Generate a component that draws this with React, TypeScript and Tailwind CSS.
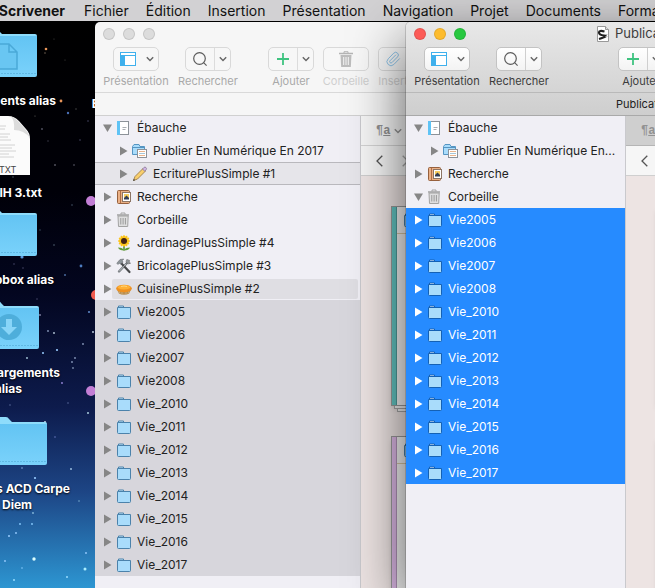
import type { ReactNode } from 'react';
import { clsx } from 'clsx';
import { Paperclip } from 'lucide-react';

type IconName =
  | 'draft'
  | 'publish'
  | 'pencil'
  | 'research'
  | 'trash'
  | 'sunflower'
  | 'tools'
  | 'pie'
  | 'folder';

interface BinderItem {
  label: string;
  icon: IconName;
  nested?: boolean;
  open?: boolean;
  state?: 'current' | 'hovered' | 'selected';
}

const YEARS = [
  'Vie2005', 'Vie2006', 'Vie2007', 'Vie2008', 'Vie_2010', 'Vie_2011',
  'Vie_2012', 'Vie_2013', 'Vie_2014', 'Vie_2015', 'Vie_2016', 'Vie_2017',
];

const yearItems: BinderItem[] = YEARS.map((label) => ({ label, icon: 'folder', state: 'selected' }));

const backItems: BinderItem[] = [
  { label: 'Ébauche', icon: 'draft', open: true },
  { label: 'Publier En Numérique En 2017', icon: 'publish', nested: true },
  { label: 'EcriturePlusSimple #1', icon: 'pencil', nested: true, state: 'current' },
  { label: 'Recherche', icon: 'research' },
  { label: 'Corbeille', icon: 'trash' },
  { label: 'JardinagePlusSimple #4', icon: 'sunflower' },
  { label: 'BricolagePlusSimple #3', icon: 'tools' },
  { label: 'CuisinePlusSimple #2', icon: 'pie', state: 'hovered' },
  ...yearItems,
];

const frontItems: BinderItem[] = [
  { label: 'Ébauche', icon: 'draft', open: true },
  { label: 'Publier En Numérique En...', icon: 'publish', nested: true },
  { label: 'Recherche', icon: 'research' },
  { label: 'Corbeille', icon: 'trash', open: true },
  ...yearItems,
];

const MENUS = ['Fichier', 'Édition', 'Insertion', 'Présentation', 'Navigation', 'Projet', 'Documents', 'Format'];

// x, y, radius, colour
const STARS: [number, number, number, string][] = [
  [46, 27, 1.3, '#e8955a'], [45, 31, 0.7, '#887766'], [54, 17, 0.6, '#444'], [65, 38, 0.5, '#555'],
  [61, 79, 1.4, '#e8955a'], [68, 91, 1.2, '#4a6fb5'], [76, 87, 0.7, '#555'], [35, 94, 0.6, '#666'],
  [42, 107, 0.9, '#556'], [88, 99, 0.7, '#557'], [48, 119, 0.7, '#445'], [80, 118, 0.7, '#557'],
  [55, 143, 0.8, '#889'], [74, 143, 0.8, '#667'], [13, 155, 0.8, '#456'], [72, 183, 0.8, '#456'],
  [22, 235, 1.6, '#5b9be0'], [40, 208, 0.7, '#456'], [54, 223, 0.8, '#567'], [81, 244, 1.4, '#4d7cc0'],
  [65, 253, 1, '#4a6a9c'], [14, 242, 0.7, '#557'], [23, 246, 0.7, '#557'], [37, 277, 0.7, '#557'],
  [89, 290, 1.1, '#5d86c4'], [40, 293, 0.9, '#88a'], [48, 309, 0.9, '#89b'], [54, 311, 0.9, '#bcd'],
  [93, 310, 0.9, '#cde'], [83, 322, 0.9, '#89b'], [57, 328, 1.1, '#9cf'], [43, 331, 1, '#9cf'],
  [27, 336, 0.9, '#acd'], [75, 336, 0.9, '#89b'], [72, 340, 0.9, '#89b'], [73, 346, 0.9, '#78a'],
  [62, 361, 0.9, '#98d'], [68, 381, 0.7, '#67a'], [88, 391, 1, '#acd'], [45, 400, 1, '#cde'],
  [55, 415, 0.8, '#67b'], [10, 383, 0.7, '#67a'], [71, 447, 1, '#9bd'], [35, 456, 1.1, '#9cf'],
  [22, 446, 0.8, '#8ad'], [79, 479, 0.8, '#7ac'], [33, 491, 0.9, '#8bd'], [20, 502, 0.9, '#8cf'],
  [32, 502, 0.9, '#8cf'], [16, 511, 0.9, '#9cf'], [9, 514, 1, '#9cf'], [34, 537, 1.7, '#dff'],
  [5, 539, 0.9, '#9cf'], [86, 531, 0.9, '#9cf'], [85, 547, 1.5, '#aef'], [22, 546, 0.8, '#8cf'],
  [67, 555, 1, '#9df'], [14, 558, 1, '#9df'],
];

function RowIcon({ name, lit }: { name: IconName; lit?: boolean }) {
  const common = { width: 16, height: 16, viewBox: '0 0 16 16', className: 'shrink-0', 'aria-hidden': true };
  switch (name) {
    case 'draft':
      return (
        <svg {...common}>
          <rect x="1.5" y="1.5" width="11" height="13" fill="#fff" stroke="#8c9298" />
          <rect x="1" y="1" width="3" height="14" fill="#5fc3f5" />
          <path d="M6.500 7.500h4M6.500 9.500h3" stroke="#a9adb2" />
        </svg>
      );
    case 'publish':
      return (
        <svg {...common}>
          <path d="M.5 3.500l1.500-2h5l1 2h4.500v8H.5z" fill="#a9dcfb" stroke="#5595c2" />
          <path d="M1 4.500h11" stroke="#5595c2" />
          <rect x="5.500" y="6.500" width="9" height="8" fill="#fff" stroke="#8d9298" />
          <path d="M7 8.500h6M7 12.500h6" stroke="#e9b48d" />
          <path d="M7 10.500h6" stroke="#a5c6d8" />
        </svg>
      );
    case 'pencil':
      return (
        <svg {...common}>
          <path d="M1.500 14.500l1.500-4 8-8 2.500 2.500-8 8z" fill="#f9cf6c" stroke="#a58551" />
          <path d="M10.500 3l1.500-1.600q1-.8 2 .2t.2 2L12.800 5.300z" fill="#d0b5e6" stroke="#8b7997" strokeWidth=".8" />
          <path d="M1 15l.8-2.200 1.400 1.400z" fill="#444" />
        </svg>
      );
    case 'research':
      return (
        <svg {...common}>
          <rect x="1.500" y="1.500" width="12" height="13" rx="1" fill="#eab086" stroke="#96603d" />
          <path d="M4.500 2v12" stroke="#b06f45" />
          <rect x="6.500" y="3.500" width="8" height="9" fill="#fff" stroke="#8c7565" />
          <rect x="8" y="5" width="5" height="5" fill="#f6cc62" />
          <path d="M8 10.500V9l2.500-2.500L13 9v1.500z" fill="#333c55" />
        </svg>
      );
    case 'trash':
      return (
        <svg {...common}>
          <path d="M5 2.500V1h4v1.500" fill="none" stroke="#a2a2a2" />
          <path d="M1 3h12" stroke="#a2a2a2" strokeWidth="1.400" />
          <path d="M2 4h10.200l-.5 10.500H2.500z" fill="#dededf" stroke="#a2a2a2" />
          <path d="M4.800 6v6.500M7.100 6v6.500M9.400 6v6.500" stroke="#999" />
        </svg>
      );
    case 'sunflower':
      return (
        <svg {...common}>
          <path d="M8 9v6.500" stroke="#4d8b2c" strokeWidth="1.500" />
          <path d="M8 15.500q-1-3-6-3 1 3 6 3zM8 15.500q1-3 6-3-1 3-6 3z" fill="#5f9a35" />
          <g fill="#fdc51c">
            {[0, 30, 60, 90, 120, 150].map((deg) => (
              <ellipse key={deg} cx="8" cy="6" rx="1.800" ry="6" transform={`rotate(${deg} 8 6)`} />
            ))}
          </g>
          <circle cx="8" cy="6" r="3" fill="#452414" />
        </svg>
      );
    case 'tools':
      return (
        <svg {...common}>
          <path d="M3 13.500L12 4" stroke="#777c80" strokeWidth="2.400" strokeLinecap="round" />
          <path d="M10.800 1.500q-1.500 2 0 3.500t3.800.2l-1.600-.8.600-2z" fill="#94999d" stroke="#666" strokeWidth=".6" />
          <path d="M5 5l8.500 9" stroke="#48494b" strokeWidth="2.200" strokeLinecap="round" />
          <path d="M.8 5.200L4 1.500l3.800-.5-1.500 1.500.700 1.800L4.500 6l-1.200-.8L2 6.500z" fill="#8d9499" stroke="#5b5f62" strokeWidth=".5" />
          <path d="M3.200 13.300L10 6" stroke="#c9cdd0" strokeWidth=".8" />
        </svg>
      );
    case 'pie':
      return (
        <svg {...common}>
          <path d="M.5 7.500h15l-2.500 5.300q-5 2-10 0z" fill="#b98f52" />
          <path d="M3 9.500l.8 3M6 10v3.500M10 10v3.500M13 9.500l-.8 3" stroke="#c9aa77" />
          <ellipse cx="8" cy="7.500" rx="7.800" ry="3.800" fill="#ee9020" />
          <path d="M1.500 7q.5-3 6.500-3T14.500 7q-6.500 3-13 0z" fill="#ffb035" />
          <path d="M5 5.500q3-1 6 0" stroke="#ffd579" fill="none" />
        </svg>
      );
    default:
      return (
        <svg {...common}>
          <path d="M2.500 4V2h5v2" fill={lit ? '#fff' : '#c9e8fb'} stroke={lit ? '#1461b5' : '#4b82ab'} />
          <path d="M1.500 3.500h13v10q0 1-1 1h-11q-1 0-1-1z" fill="#a9dcfb" stroke={lit ? '#1461b5' : '#4b82ab'} />
        </svg>
      );
  }
}

function Disclosure({ open, lit }: { open?: boolean; lit?: boolean }) {
  return (
    <svg width="9" height="10" viewBox="0 0 9 10" className="shrink-0" fill={lit ? '#fff' : '#868686'} aria-hidden>
      <path d={open ? 'M0 1.500h9L4.500 9z' : 'M1 .5L8.500 5 1 9.500z'} />
    </svg>
  );
}

function ChevronDown({ className }: { className?: string }) {
  return (
    <svg width="8" height="6" viewBox="0 0 8 6" className={className} fill="none" stroke="currentColor" strokeWidth="1.400" aria-hidden>
      <path d="M.8 1.200L4 4.500l3.200-3.300" />
    </svg>
  );
}

function Binder({ items, active }: { items: BinderItem[]; active?: boolean }) {
  return (
    <ul>
      {items.map((item) => {
        const selected = item.state === 'selected';
        return (
          <li key={item.label} className={clsx(selected && (active ? 'bg-[#268bff]' : 'bg-[#d7d6dc]'))}>
            <button
              type="button"
              className={clsx(
                'flex h-[23px] w-full items-center whitespace-nowrap text-left text-[12px]',
                item.nested ? 'pl-6' : 'pl-2',
                item.state === 'current' && 'border-y border-[#b9b8bd] bg-[#e6e5ea]',
                selected && active ? 'text-white' : 'text-[#222]',
              )}
            >
              <Disclosure open={item.open} lit={selected && active} />
              <span
                className={clsx(
                  'flex h-5 min-w-0 flex-1 items-center gap-[5px] pl-1',
                  item.state === 'hovered' && 'mr-0.5 rounded-xs bg-[#dfdee3]',
                )}
              >
                <RowIcon name={item.icon} lit={selected && active} />
                {item.label}
              </span>
            </button>
          </li>
        );
      })}
    </ul>
  );
}

interface ToolProps {
  label: string;
  children: ReactNode;
  active?: boolean;
  width: string;
  menu?: 'plain' | 'split';
  disabled?: boolean;
}

function Tool({ label, children, active, width, menu, disabled }: ToolProps) {
  return (
    <button type="button" disabled={disabled} className={clsx('flex shrink-0 flex-col items-center gap-0.5', width)}>
      <span
        className={clsx(
          'flex h-6 w-[46px] items-stretch rounded-[5px] border',
          active ? 'border-[#c3c3c3] bg-gradient-to-b from-white to-[#f3f3f3]' : 'border-[#d9d9d9] bg-[#f7f7f7]',
        )}
      >
        <span className="flex flex-1 items-center justify-center">{children}</span>
        {menu && (
          <span
            className={clsx(
              'flex w-4 items-center justify-center text-[#666]',
              menu === 'split' && (active ? 'border-l border-[#cfcfcf]' : 'border-l border-[#dcdcdc]'),
            )}
          >
            <ChevronDown />
          </span>
        )}
      </span>
      <span
        className={clsx(
          'whitespace-nowrap text-[11px] leading-4',
          active ? 'text-[#3c3c3c]' : disabled ? 'text-[#cfcfcf]' : 'text-[#a9a9a9]',
        )}
      >
        {label}
      </span>
    </button>
  );
}

function Toolbar({ active }: { active?: boolean }) {
  return (
    <div className="flex h-[46px] items-start gap-[9px] pl-2 pt-px">
      <Tool label="Présentation" width="w-[66px]" menu="plain" active={active}>
        <svg width="16" height="14" viewBox="0 0 16 14" aria-hidden>
          <rect x=".5" y=".5" width="15" height="13" fill="#fff" stroke="#3fb0ec" />
          <path d="M0 3.500h16" stroke="#3fb0ec" />
          <rect x="0" y="4" width="5" height="10" fill="#3fb0ec" />
        </svg>
      </Tool>
      <Tool label="Rechercher" width="w-[60px]" menu="split" active={active}>
        <svg width="16" height="16" viewBox="0 0 16 16" fill="none" stroke="#5b5b5b" strokeWidth="1.200" aria-hidden>
          <circle cx="7.500" cy="7.500" r="5.800" />
          <path d="M11.600 11.600l3 3" />
        </svg>
      </Tool>
      <div className={clsx('flex gap-[9px]', active ? 'ml-[60px]' : 'ml-[21px]')}>
        <Tool label="Ajouter" width="w-[46px]" menu="split" active={active}>
          <svg width="12" height="12" viewBox="0 0 12 12" stroke="#3fc380" strokeWidth="1.800" aria-hidden>
            <path d="M6 0v12M0 6h12" />
          </svg>
        </Tool>
        <Tool label="Corbeille" width="w-[46px]" active={active} disabled>
          <svg width="14" height="16" viewBox="0 0 14 16" aria-hidden>
            <path d="M5 2V.7h4V2" fill="none" stroke="#b5b5b5" />
            <path d="M0 2.500h14" stroke="#b5b5b5" strokeWidth="1.300" />
            <path d="M1.500 4h11l-.7 12H2.200z" fill="#bdbdbd" />
            <path d="M4.700 6v8M7 6v8M9.300 6v8" stroke="#f5f5f5" />
          </svg>
        </Tool>
        <Tool label="Insertion" width="w-[46px]" menu="plain" active={active} disabled>
          <Paperclip size={16} strokeWidth={1.5} className="text-[#8dc3e8]" />
        </Tool>
      </div>
    </div>
  );
}

function Card({ strip }: { strip: string }) {
  return (
    <div className="h-[200px] w-72 border border-[#9a9a9a] bg-[#f4f4f4] shadow-md">
      <div className="flex h-full">
        <div className={clsx('w-[5px] border-r border-black/20', strip)} />
        <div className="flex h-[27px] flex-1 items-center border-b border-[#d8c7a8] pl-1.5">
          <RowIcon name="folder" />
        </div>
      </div>
    </div>
  );
}

function Editor({ active }: { active?: boolean }) {
  return (
    <section className="flex min-w-0 flex-1 flex-col overflow-hidden bg-[#ede4e3]">
      <div
        className={clsx(
          'flex h-[30px] shrink-0 items-center gap-1 border-b pl-[15px] text-[#929292]',
          active ? 'border-[#b5b5b5] bg-[#cfcfcf]' : 'border-[#d3d3d3] bg-[#f6f6f6]',
        )}
      >
        <span className="font-[Liberation_Mono] text-[12px] font-bold">
          ¶<span className="underline">a</span>
        </span>
        <ChevronDown />
      </div>
      <div className="flex h-[30px] shrink-0 items-center gap-[19px] border-b border-[#cfcfcf] bg-[#f6f6f6] pl-[15px]">
        <button type="button" aria-label="Précédent" className="text-[#555]">
          <svg width="7" height="12" viewBox="0 0 7 12" fill="none" stroke="currentColor" strokeWidth="1.300">
            <path d="M6.300.7L1 6l5.300 5.300" />
          </svg>
        </button>
        <button type="button" aria-label="Suivant" className="text-[#aaa]">
          <svg width="7" height="12" viewBox="0 0 7 12" fill="none" stroke="currentColor" strokeWidth="1.300">
            <path d="M.7.7L6 6 .7 11.300" />
          </svg>
        </button>
      </div>
      <div className="flex flex-col pl-[30px] pt-[30px]">
        <Card strip="bg-[#62c4c1]" />
        <div className="ml-[3px] h-[3px] w-72 shrink-0 border border-t-0 border-[#a5a5a5] bg-[#f0f0f0]" />
        <div className="mb-6 ml-1.5 h-[3px] w-72 shrink-0 border border-t-0 border-[#a5a5a5] bg-[#f0f0f0]" />
        <Card strip="bg-[#dcb8e6]" />
      </div>
    </section>
  );
}

interface ProjectWindowProps {
  active?: boolean;
  place: string;
  items: BinderItem[];
  sidebar: string;
}

function ProjectWindow({ active, place, items, sidebar }: ProjectWindowProps) {
  const lights = active ? ['bg-[#fc5b57]', 'bg-[#fdbc2e]', 'bg-[#28c840]'] : ['bg-[#dcdcdc]', 'bg-[#dcdcdc]', 'bg-[#dcdcdc]'];
  return (
    <main
      className={clsx(
        'absolute -right-10 bottom-0 top-0 flex flex-col overflow-hidden rounded-tl-[5px]',
        active && 'shadow-[0_0_0_1px_rgba(0,0,0,0.15),0_20px_56px_rgba(0,0,0,0.65)]',
        place,
      )}
    >
      <header
        className={clsx('shrink-0', active ? 'bg-gradient-to-b from-[#e8e8e8] to-[#cecece]' : 'bg-[#f6f6f6]')}
      >
        <div className="flex h-6 items-center pl-2">
          <div className="flex gap-2">
            {lights.map((color, i) => (
              <span key={i} className={clsx('size-3 rounded-full border border-black/10', color)} />
            ))}
          </div>
          {active && (
            <h1 className="ml-[131px] flex items-center gap-1.5 whitespace-nowrap text-[13px] text-[#3d3d3d]">
              <svg width="12" height="16" viewBox="0 0 12 16" aria-hidden>
                <path d="M.5.500h8l3 3v12H.5z" fill="#fff" stroke="#999" />
                <path d="M8.500.5v3h3" fill="#ddd" stroke="#999" />
                <path d="M7.500 5.500Q2 4 2 6.500T7 9.500 2 13" fill="none" stroke="#222" strokeWidth="2.200" />
                <path d="M8 8.500h2.500M8.500 10.500h2" stroke="#bbb" />
              </svg>
              Publication
            </h1>
          )}
        </div>
        <Toolbar active={active} />
        <div
          className={clsx(
            'flex h-6 items-center border-y text-[11px]',
            active ? 'border-b-[#a9a9a9] border-t-[#b9b9b9] pl-[210px] text-[#222]' : 'border-b-[#d0d0d0] border-t-[#d9d9d9]',
          )}
        >
          {active && 'Publication'}
        </div>
      </header>
      <div className="flex min-h-0 flex-1">
        <nav className={clsx('shrink-0 overflow-hidden border-r border-[#c9c9cd] bg-[#f0eff5]', sidebar)}>
          <Binder items={items} active={active} />
        </nav>
        <Editor active={active} />
      </div>
    </main>
  );
}

function DesktopFolder({ kind }: { kind?: 'document' | 'download' }) {
  return (
    <svg width="60" height="48" viewBox="0 0 60 48" aria-hidden>
      <path d="M0 9V2q0-2 2-2h17q2 0 3 2l3 3h33q2 0 2 2v8H0z" fill="#8edcfb" />
      <path d="M0 7h60v39q0 2-2 2H2q-2 0-2-2z" fill="url(#folderFace)" />
      <path d="M0 44.500h60" stroke="#60b8e4" strokeDasharray="2 1" />
      {kind === 'document' && (
        <path d="M21 15h11l8 8v17H21zM32 15v8h8" fill="#69c6f2" stroke="#4aa9d8" strokeWidth="1.500" />
      )}
      {kind === 'download' && (
        <>
          <circle cx="30" cy="26" r="13" fill="#4eaedb" />
          <path d="M27 18h6v8h5l-8 8-8-8h5z" fill="#88d5f8" />
        </>
      )}
    </svg>
  );
}

function DesktopLabel({ place, children }: { place: string; children: ReactNode }) {
  return (
    <span
      className={clsx(
        'absolute left-0 flex justify-end whitespace-nowrap text-[12px] font-bold leading-4 text-white [text-shadow:0_1px_2px_#000]',
        place,
      )}
    >
      {children}
    </span>
  );
}

function Desktop() {
  return (
    <div className="absolute inset-0 overflow-hidden bg-[linear-gradient(#000_0%,#000008_30%,#030620_48%,#0d1b4c_68%,#1d4585_83%,#2d96d2_100%)]">
      <svg width="100" height="566" viewBox="0 0 100 566" aria-hidden>
        <defs>
          <linearGradient id="folderFace" x1="0" y1="0" x2="0" y2="1">
            <stop offset="0" stopColor="#63c4f3" />
            <stop offset="1" stopColor="#7ad2fb" />
          </linearGradient>
        </defs>
        {STARS.map(([x, y, r, fill]) => (
          <circle key={`${x}-${y}`} cx={x} cy={y} r={r} fill={fill} />
        ))}
        <circle cx="91" cy="179" r="5" fill="#c37fd6" />
        <circle cx="96" cy="273" r="5" fill="#f05c50" />
        <circle cx="91" cy="369" r="5" fill="#c37fd6" />
      </svg>
      <div className="absolute -left-[23px] top-[7px]"><DesktopFolder kind="document" /></div>
      <DesktopLabel place="top-[71px] w-14">ents alias</DesktopLabel>
      <DesktopLabel place="top-[74px] w-[99px]">E</DesktopLabel>
      <div className="absolute left-0 top-[94px]">
        <svg width="30" height="60" viewBox="0 0 30 60" aria-hidden>
          <path d="M0 0h8q6 0 11 5l7 8q4 4 4 10v36H0z" fill="#fbfbfb" />
          <path d="M10 0q5 3 4 14 10 0 16 8-1-5-5-9l-7-8q-4-4-8-5z" fill="#dcdcdc" />
          <path d="M0 10h6M0 13h5M0 18h10M0 21h8M0 24h11M0 29h15M0 32h12M0 35h16M0 38h9M0 41h14" stroke="#d2d2d2" />
          <text x="-1" y="57" fontSize="9" fill="#444" fontFamily="Inter, sans-serif">TXT</text>
        </svg>
      </div>
      <DesktopLabel place="top-[163px] w-[42px]">IH 3.txt</DesktopLabel>
      <div className="absolute -left-[23px] top-[186px]"><DesktopFolder /></div>
      <DesktopLabel place="top-[250px] w-[54px]">pbox alias</DesktopLabel>
      <div className="absolute -left-[21px] top-[279px]"><DesktopFolder kind="download" /></div>
      <DesktopLabel place="top-[343px] w-[60px]">argements</DesktopLabel>
      <DesktopLabel place="top-[359px] w-[22px]">alias</DesktopLabel>
      <div className="absolute -left-[13px] top-[395px]"><DesktopFolder /></div>
      <DesktopLabel place="top-[459px] w-[70px]">s ACD Carpe</DesktopLabel>
      <DesktopLabel place="top-[475px] w-8">Diem</DesktopLabel>
    </div>
  );
}

export default function App() {
  return (
    <div className="flex h-screen flex-col overflow-hidden bg-black font-[Inter,sans-serif]">
      <nav className="flex h-[21px] shrink-0 items-center gap-[17px] whitespace-nowrap bg-[#d2d1d3] text-[14px] leading-5 text-[#111]">
        <button type="button" className="flex w-[67px] justify-end pr-0.5 font-bold">Scrivener</button>
        {MENUS.map((menu) => (
          <button key={menu} type="button">{menu}</button>
        ))}
      </nav>
      <div className="relative mt-px min-h-0 flex-1">
        <Desktop />
        <ProjectWindow place="left-[95px]" items={backItems} sidebar="w-[266px]" />
        <ProjectWindow active place="left-[406px]" items={frontItems} sidebar="w-[220px]" />
      </div>
    </div>
  );
}
